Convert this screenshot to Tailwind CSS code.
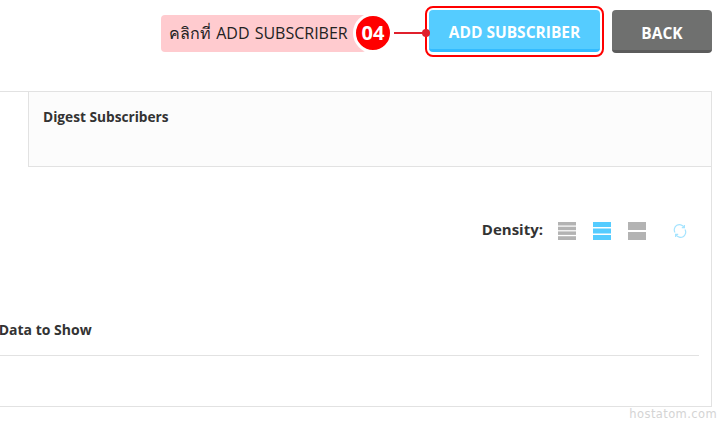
<!DOCTYPE html>
<html lang="th">
<head>
<meta charset="UTF-8">
<meta name="viewport" content="width=device-width, initial-scale=1.0">
<script src="https://cdn.jsdelivr.net/npm/@tailwindcss/browser@4"></script>
<title>Add Subscriber</title>
</head>
<body class="bg-white font-['Open_Sans',sans-serif] text-[#333]">
<div class="relative w-[720px] h-[421px] overflow-hidden">

    <!-- Buttons -->
    <div class="h-[91px] pt-[10px] pr-[8px] flex justify-end items-start gap-[12px]">
        <button class="w-[171px] h-[42px] pt-[5px] rounded-[4px] bg-[#55ccff] border-b-[3px] border-[#33bbff] text-white font-bold text-[15.5px] leading-[20px]">ADD SUBSCRIBER</button>
        <button class="w-[100px] h-[43px] pt-[5px] rounded-[4px] bg-[#6f706f] border-b-[3px] border-[#5c5c5c] text-white font-bold text-[15.5px] leading-[20px]">BACK</button>
    </div>

    <!-- Panel -->
    <div class="w-[712px] h-[316px] border-t border-r border-b border-[#e2e2e2]">

        <!-- Tabs -->
        <div class="h-[75px] flex">
            <div class="w-[28px]"></div>
            <div class="flex-1 bg-[#fcfcfc] border-l border-b border-[#e2e2e2] pl-[14px] pt-[15px] text-[13.7px] font-bold leading-[20px]">Digest Subscribers</div>
        </div>

        <!-- Density -->
        <div class="h-[48px] mt-[39px] pr-[24px] flex justify-end items-center">
            <span class="text-[15px] font-bold mr-[15px] mt-[-2px]">Density:</span>
            <svg class="mr-[17px] mt-[2px]" width="18" height="18" viewBox="0 0 18 18" fill="#b3b3b3"><rect y="0" width="18" height="3.5"/><rect y="4.7" width="18" height="3.5"/><rect y="9.4" width="18" height="3.5"/><rect y="14.2" width="18" height="3.8"/></svg>
            <svg class="mr-[17px] mt-[2px]" width="18" height="18" viewBox="0 0 18 18" fill="#55ccff"><rect y="0" width="18" height="5"/><rect y="6.5" width="18" height="5"/><rect y="13" width="18" height="5"/></svg>
            <svg class="mr-[27px] mt-[2px]" width="18" height="18" viewBox="0 0 18 18" fill="#b3b3b3"><rect y="0" width="18" height="8"/><rect y="10" width="18" height="8"/></svg>
            <svg class="mt-[2px]" width="14" height="14" viewBox="0 0 14 14" fill="none" stroke="#a5e4ff" stroke-width="1.2"><path d="M2 8.5A5.2 5.2 0 0 1 11 3.2"/><path d="M12 5.5A5.2 5.2 0 0 1 3 10.8"/><path d="M11.4 1v2.6H8.8"/><path d="M2.6 13v-2.6h2.6"/></svg>
        </div>

        <!-- Table -->
        <div class="mr-[12px] h-[102px] border-b border-[#e2e2e2]">
            <div class="pt-[66px] ml-[-25px] text-[14px] font-bold leading-[20px] whitespace-nowrap">No Data to Show</div>
        </div>
    </div>

    <div class="absolute right-[3px] top-[406px] text-[11.5px] leading-[16px] tracking-[0.4px] text-[#d4d4d4] font-['DejaVu_Sans',sans-serif]">hostatom.com</div>

    <!-- Annotation -->
    <div class="absolute left-[425px] top-[6px] w-[179px] h-[51px] border-[2px] border-[#f00] rounded-[8px]"></div>
    <div class="absolute left-[161px] top-[15px] w-[205px] h-[37px] rounded-[4px] bg-[#ffcbcf] pl-[8px] text-[16px] leading-[36px] [word-spacing:1px] text-[#222] font-['Open_Sans','Noto_Sans',sans-serif] whitespace-nowrap">คลิกที่ ADD SUBSCRIBER</div>
    <div class="absolute left-[353px] top-[13px] w-[40px] h-[40px] rounded-full bg-[#f00] border-[3px] border-white flex items-center justify-center text-white font-bold text-[20px]">04</div>
    <div class="absolute left-[394px] top-[32px] w-[32px] h-[2px] bg-[#e0202c]"></div>
    <div class="absolute left-[422px] top-[29px] w-[8px] h-[8px] rounded-full bg-[#e0202c]"></div>
</div>
</body>
</html>
